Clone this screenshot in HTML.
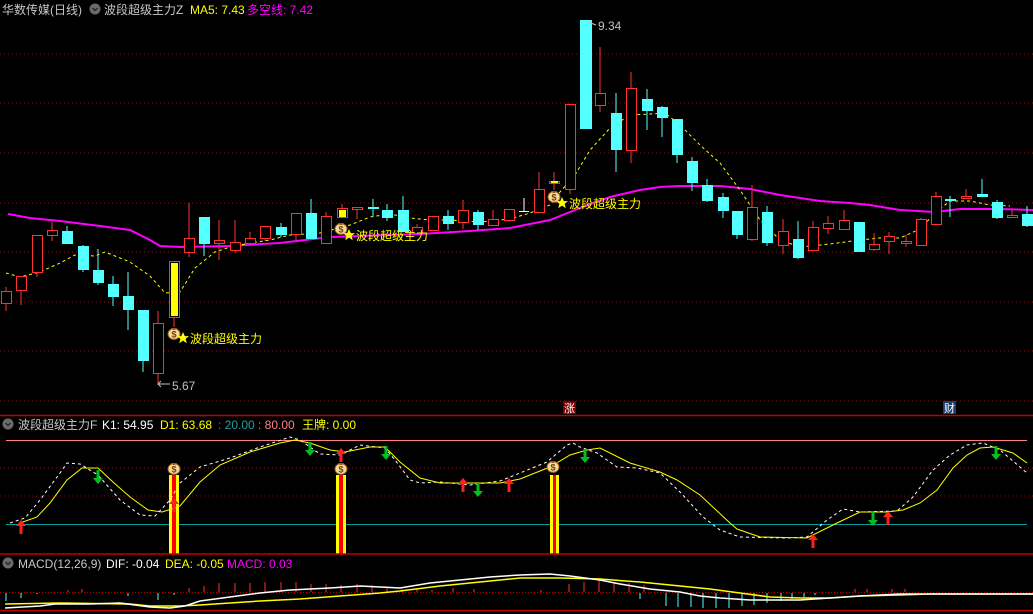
<!DOCTYPE html>
<html><head><meta charset="utf-8"><style>
html,body{margin:0;padding:0;background:#000;width:1033px;height:614px;overflow:hidden}
svg{display:block}
text{font-family:"Liberation Sans","Noto Sans CJK SC",sans-serif;font-size:12px}
.r line,.r rect{stroke:#ff3232;fill:#000;shape-rendering:crispEdges}
.c line,.c rect{stroke:#54ffff;fill:#54ffff;shape-rendering:crispEdges}
</style></head><body>
<svg width="1033" height="614" viewBox="0 0 1033 614" xmlns="http://www.w3.org/2000/svg">
<defs>
<g id="bag"><ellipse cx="0" cy="1" rx="6" ry="5.5" fill="#f3dc96" stroke="#9a5a1a" stroke-width="1"/><path d="M-3,-5 L3,-5 L1,-3 L-1,-3Z" fill="#9a5a1a"/><text x="0" y="4.5" text-anchor="middle" style="font-size:9px;font-weight:bold" fill="#7a3a10">$</text></g>
<path id="star" d="M0,-6 L1.8,-1.9 6,-1.9 2.6,0.9 3.8,5.2 0,2.6 -3.8,5.2 -2.6,0.9 -6,-1.9 -1.8,-1.9Z" fill="#ffff00"/>
<g id="up"><path d="M0,-7 L5,-1 L1.5,-1 L1.5,7 L-1.5,7 L-1.5,-1 L-5,-1Z" fill="#ff2020"/></g>
<g id="dn"><path d="M0,7 L5,1 L1.5,1 L1.5,-7 L-1.5,-7 L-1.5,1 L-5,1Z" fill="#00c020"/></g>
<g id="hd"><circle cx="0" cy="0" r="5.5" fill="#6a6a6a"/><path d="M-2.5,-1 L0,1.5 L2.5,-1" stroke="#222" stroke-width="1.3" fill="none"/></g>
</defs>

<g stroke="#8a1010" stroke-width="1" stroke-dasharray="1,3">
<line x1="0" y1="54" x2="1033" y2="54"/><line x1="0" y1="103" x2="1033" y2="103"/><line x1="0" y1="153" x2="1033" y2="153"/><line x1="0" y1="203" x2="1033" y2="203"/><line x1="0" y1="252" x2="1033" y2="252"/><line x1="0" y1="302" x2="1033" y2="302"/><line x1="0" y1="351" x2="1033" y2="351"/><line x1="0" y1="401" x2="1033" y2="401"/>
</g>
<line x1="0" y1="415.5" x2="1033" y2="415.5" stroke="#c00000" stroke-width="1.5"/>

<polyline fill="none" stroke="#ff00ff" stroke-width="2" points="8,214 30,218 60,221 100,226 130,230 150,240 160,246 180,247 230,246 280,243 330,237 420,234 470,231 510,228 550,220 580,208 610,197 640,190 660,187 680,186 720,186 750,189 780,195 820,201 850,203 870,205 900,210 935,212 960,209 1000,209 1033,210"/>
<polyline fill="none" stroke="#ffff00" stroke-width="1" stroke-dasharray="3,3" points="6,273 20,277 40,272 60,263 75,255 95,256 105,252 130,262 150,276 165,293 180,292 195,268 215,252 230,247 250,243 270,240 290,235 320,233 350,225 370,217 390,214 410,218 430,220 450,220 480,222 510,219 530,213 550,205 560,192 575,175 590,150 610,128 630,115 650,114 665,113 680,125 700,145 720,163 740,190 760,220 780,240 800,247 830,244 860,240 880,238 900,238 920,229 935,213 950,201 970,201 990,205 1010,206"/>

<g stroke-width="1">
<g class="r">
<line x1="6" y1="287" x2="6" y2="311"/><rect x="1.5" y="291.5" width="10" height="12"/>
<line x1="21" y1="276" x2="21" y2="305"/><rect x="16.5" y="276.5" width="10" height="14"/>
<line x1="37" y1="235" x2="37" y2="277"/><rect x="32.5" y="235.5" width="10" height="37"/>
<line x1="52" y1="222" x2="52" y2="241"/><rect x="47.5" y="230.5" width="10" height="5"/>
<line x1="158" y1="311" x2="158" y2="385"/><rect x="153.5" y="323.5" width="10" height="50"/>
<line x1="174" y1="261" x2="174" y2="327"/><rect x="169.5" y="261.5" width="10" height="56"/>
<line x1="189" y1="203" x2="189" y2="257"/><rect x="184.5" y="238.5" width="10" height="14"/>
<line x1="219" y1="220" x2="219" y2="260"/><rect x="214.5" y="240.5" width="10" height="3"/>
<line x1="235" y1="220" x2="235" y2="253"/><rect x="230.5" y="242.5" width="10" height="8"/>
<line x1="250" y1="232" x2="250" y2="243"/><rect x="245.5" y="238.5" width="10" height="5"/>
<line x1="265" y1="226" x2="265" y2="241"/><rect x="260.5" y="226.5" width="10" height="12"/>
<line x1="296" y1="213" x2="296" y2="240"/><rect x="291.5" y="213.5" width="10" height="21"/>
<line x1="326" y1="212" x2="326" y2="244"/><rect x="321.5" y="216.5" width="10" height="27"/>
<line x1="342" y1="204" x2="342" y2="217"/><rect x="337.5" y="208.5" width="10" height="9"/>
<line x1="357" y1="207" x2="357" y2="219"/><rect x="352.5" y="207.5" width="10" height="2"/>
<line x1="417" y1="224" x2="417" y2="233"/><rect x="412.5" y="227.5" width="10" height="6"/>
<line x1="433" y1="216" x2="433" y2="230"/><rect x="428.5" y="216.5" width="10" height="14"/>
<line x1="463" y1="200" x2="463" y2="229"/><rect x="458.5" y="210.5" width="10" height="12"/>
<line x1="493" y1="210" x2="493" y2="225"/><rect x="488.5" y="219.5" width="10" height="6"/>
<line x1="509" y1="209" x2="509" y2="222"/><rect x="504.5" y="209.5" width="10" height="11"/>
<line x1="539" y1="172" x2="539" y2="212"/><rect x="534.5" y="189.5" width="10" height="23"/>
<line x1="554" y1="172" x2="554" y2="190"/><rect x="549.5" y="181.5" width="10" height="2"/>
<line x1="570" y1="104" x2="570" y2="194"/><rect x="565.5" y="104.5" width="10" height="85"/>
<line x1="600" y1="47" x2="600" y2="112"/><rect x="595.5" y="93.5" width="10" height="12"/>
<line x1="631" y1="72" x2="631" y2="163"/><rect x="626.5" y="88.5" width="10" height="62"/>
<line x1="752" y1="185" x2="752" y2="241"/><rect x="747.5" y="207.5" width="10" height="32"/>
<line x1="783" y1="219" x2="783" y2="254"/><rect x="778.5" y="231.5" width="10" height="14"/>
<line x1="813" y1="221" x2="813" y2="250"/><rect x="808.5" y="227.5" width="10" height="23"/>
<line x1="828" y1="216" x2="828" y2="234"/><rect x="823.5" y="223.5" width="10" height="5"/>
<line x1="844" y1="210" x2="844" y2="229"/><rect x="839.5" y="220.5" width="10" height="9"/>
<line x1="874" y1="233" x2="874" y2="251"/><rect x="869.5" y="244.5" width="10" height="5"/>
<line x1="889" y1="232" x2="889" y2="254"/><rect x="884.5" y="236.5" width="10" height="5"/>
<line x1="906" y1="235" x2="906" y2="247"/><rect x="901.5" y="241.5" width="10" height="2"/>
<line x1="921" y1="218" x2="921" y2="245"/><rect x="916.5" y="219.5" width="10" height="26"/>
<line x1="936" y1="192" x2="936" y2="224"/><rect x="931.5" y="196.5" width="10" height="28"/>
<line x1="966" y1="189" x2="966" y2="198"/><rect x="961.5" y="196.5" width="10" height="2"/>
<line x1="1012" y1="210" x2="1012" y2="217"/><rect x="1007.5" y="215.5" width="10" height="2"/>
</g>
<g fill="#ffff00"><rect x="171" y="263" width="7" height="53"/><rect x="339" y="210" width="7" height="7"/><rect x="551" y="181" width="7" height="2"/></g>
<g class="c">
<line x1="67" y1="226" x2="67" y2="244"/><rect x="62.5" y="231.5" width="10" height="12"/>
<line x1="83" y1="245" x2="83" y2="272"/><rect x="78.5" y="246.5" width="10" height="23"/>
<line x1="98" y1="249" x2="98" y2="285"/><rect x="93.5" y="270.5" width="10" height="12"/>
<line x1="113" y1="276" x2="113" y2="306"/><rect x="108.5" y="284.5" width="10" height="12"/>
<line x1="128" y1="272" x2="128" y2="330"/><rect x="123.5" y="296.5" width="10" height="13"/>
<line x1="143" y1="310" x2="143" y2="372"/><rect x="138.5" y="310.5" width="10" height="50"/>
<line x1="204" y1="217" x2="204" y2="256"/><rect x="199.5" y="217.5" width="10" height="26"/>
<line x1="281" y1="223" x2="281" y2="237"/><rect x="276.5" y="227.5" width="10" height="7"/>
<line x1="311" y1="199" x2="311" y2="239"/><rect x="306.5" y="213.5" width="10" height="25"/>
<line x1="373" y1="199" x2="373" y2="217"/><rect x="368.5" y="207.5" width="10" height="1"/>
<line x1="387" y1="204" x2="387" y2="221"/><rect x="382.5" y="210.5" width="10" height="7"/>
<line x1="403" y1="196" x2="403" y2="231"/><rect x="398.5" y="210.5" width="10" height="21"/>
<line x1="448" y1="210" x2="448" y2="230"/><rect x="443.5" y="216.5" width="10" height="7"/>
<line x1="478" y1="210" x2="478" y2="230"/><rect x="473.5" y="212.5" width="10" height="12"/>
<line x1="586" y1="20" x2="586" y2="128"/><rect x="580.5" y="20.5" width="11" height="108"/>
<line x1="616" y1="93" x2="616" y2="172"/><rect x="611.5" y="113.5" width="10" height="36"/>
<line x1="647" y1="89" x2="647" y2="130"/><rect x="642.5" y="99.5" width="10" height="11"/>
<line x1="662" y1="106" x2="662" y2="137"/><rect x="657.5" y="107.5" width="10" height="10"/>
<line x1="677" y1="119" x2="677" y2="163"/><rect x="672.5" y="119.5" width="10" height="35"/>
<line x1="692" y1="157" x2="692" y2="191"/><rect x="687.5" y="161.5" width="10" height="21"/>
<line x1="707" y1="179" x2="707" y2="202"/><rect x="702.5" y="185.5" width="10" height="15"/>
<line x1="723" y1="193" x2="723" y2="218"/><rect x="718.5" y="197.5" width="10" height="13"/>
<line x1="737" y1="211" x2="737" y2="239"/><rect x="732.5" y="211.5" width="10" height="23"/>
<line x1="767" y1="206" x2="767" y2="246"/><rect x="762.5" y="212.5" width="10" height="30"/>
<line x1="798" y1="221" x2="798" y2="259"/><rect x="793.5" y="239.5" width="10" height="18"/>
<line x1="859" y1="222" x2="859" y2="252"/><rect x="854.5" y="222.5" width="10" height="29"/>
<line x1="950" y1="196" x2="950" y2="217"/><rect x="945.5" y="199.5" width="10" height="1"/>
<line x1="982" y1="179" x2="982" y2="197"/><rect x="977.5" y="194.5" width="10" height="2"/>
<line x1="997" y1="200" x2="997" y2="219"/><rect x="992.5" y="202.5" width="10" height="15"/>
<line x1="1027" y1="206" x2="1027" y2="227"/><rect x="1022.5" y="214.5" width="10" height="11"/>
</g>
<g stroke="#ffffff"><line x1="524" y1="198" x2="524" y2="211"/><line x1="519" y1="211.5" x2="529" y2="211.5"/></g>
</g>

<use href="#bag" x="174" y="333"/><use href="#star" x="183" y="338"/>
<text x="190" y="343" fill="#ffff00">波段超级主力</text>
<use href="#bag" x="341" y="228"/><use href="#star" x="349" y="235"/>
<text x="356" y="240" fill="#ffff00">波段超级主力</text>
<use href="#bag" x="554" y="196"/><use href="#star" x="562" y="203"/>
<text x="569" y="208" fill="#ffff00">波段超级主力</text>

<text x="598" y="30" fill="#c0c0c0">9.34</text>
<path d="M588,22 L596,25" stroke="#c0c0c0"/>
<text x="172" y="390" fill="#c0c0c0">5.67</text>
<path d="M158,384 L170,384 M161,381 L158,384 L161,387" stroke="#c0c0c0" fill="none"/>

<rect x="563" y="401" width="13" height="13" fill="#800000"/>
<text x="564" y="412" fill="#fff" style="font-size:11px">涨</text>
<rect x="943" y="401" width="13" height="13" fill="#1a3f6e"/>
<text x="944" y="412" fill="#fff" style="font-size:11px">财</text>

<text x="2" y="14" fill="#c8c8c8">华数传媒(日线)</text>
<use href="#hd" x="95" y="9"/>
<text x="104" y="14" fill="#c8c8c8">波段超级主力Z</text>
<text x="190" y="14" fill="#ffff00">MA5: 7.43</text>
<text x="247" y="14" fill="#ff00ff">多空线: 7.42</text>

<use href="#hd" x="8" y="424"/>
<text x="18" y="429" fill="#c8c8c8">波段超级主力F</text>
<text x="102" y="429" fill="#ffffff">K1: 54.95</text>
<text x="160" y="429" fill="#ffff00">D1: 63.68</text>
<text x="218" y="429" fill="#20a0a0">: 20.00</text>
<text x="258" y="429" fill="#ff8080">: 80.00</text>
<text x="302" y="429" fill="#ffff00">王牌: 0.00</text>
<line x1="6" y1="440.5" x2="1027" y2="440.5" stroke="#ff8080"/>
<g stroke="#8a1010" stroke-dasharray="1,3"><line x1="0" y1="468" x2="1033" y2="468"/><line x1="0" y1="496" x2="1033" y2="496"/></g>
<line x1="6" y1="524.5" x2="1027" y2="524.5" stroke="#00a0a0"/>
<g>
<rect x="169" y="475" width="10" height="79" fill="#ffff00"/><rect x="172" y="475" width="4" height="79" fill="#ff0000"/>
<rect x="336" y="475" width="10" height="79" fill="#ffff00"/><rect x="339" y="475" width="4" height="79" fill="#ff0000"/>
<rect x="550" y="475" width="9" height="79" fill="#ffff00"/><rect x="553" y="475" width="3" height="79" fill="#ff0000"/>
</g>
<polyline fill="none" stroke="#ffffff" stroke-dasharray="3,3" points="10,523 25,518 40,500 60,473 67,463 80,464 98,475 120,500 140,515 155,516 170,500 180,483 200,467 230,458 260,447 290,437 300,440 320,454 340,455 360,445 385,448 395,460 410,480 420,483 440,482 470,485 500,481 520,473 547,462 567,445 573,443 580,447 597,453 617,467 637,468 660,473 680,492 703,517 720,530 740,537 787,538 807,537 827,520 843,509 860,512 897,511 913,497 933,470 950,455 967,445 983,443 1000,450 1027,473"/>
<polyline fill="none" stroke="#ffff00" points="20,523 37,517 50,503 67,480 82,468 98,468 113,482 130,497 148,510 162,512 175,508 180,506 200,482 220,465 250,452 280,443 295,440 310,443 330,450 345,452 370,447 385,447 400,462 420,478 440,483 500,483 520,479 550,467 570,455 587,450 600,448 630,463 660,472 677,480 700,495 730,523 737,529 760,537 807,538 837,523 860,512 887,512 903,510 920,503 937,490 953,468 967,455 980,448 993,447 1013,453 1027,463"/>
<use href="#bag" x="174" y="468"/><use href="#bag" x="341" y="468"/><use href="#bag" x="553" y="466"/>
<use href="#up" x="21" y="527"/><use href="#up" x="174" y="505"/><use href="#up" x="341" y="455"/><use href="#up" x="463" y="485"/><use href="#up" x="509" y="485"/><use href="#up" x="813" y="541"/><use href="#up" x="888" y="518"/>
<use href="#dn" x="98" y="477"/><use href="#dn" x="310" y="449"/><use href="#dn" x="386" y="453"/><use href="#dn" x="478" y="490"/><use href="#dn" x="585" y="456"/><use href="#dn" x="873" y="519"/><use href="#dn" x="996" y="453"/>
<line x1="0" y1="554" x2="1033" y2="554" stroke="#c00000" stroke-width="1.5"/>

<use href="#hd" x="8" y="563"/>
<text x="18" y="568" fill="#c8c8c8">MACD(12,26,9)</text>
<text x="106" y="568" fill="#ffffff">DIF: -0.04</text>
<text x="165" y="568" fill="#ffff00">DEA: -0.05</text>
<text x="227" y="568" fill="#ff00ff">MACD: 0.03</text>
<line x1="0" y1="592.5" x2="1033" y2="592.5" stroke="#c00000" stroke-dasharray="1,2"/>
<g stroke="#ff3030">
<line x1="68" y1="592" x2="68" y2="590"/><line x1="82" y1="592" x2="82" y2="589"/><line x1="189" y1="592" x2="189" y2="588"/><line x1="204" y1="592" x2="204" y2="586"/><line x1="219" y1="592" x2="219" y2="583"/><line x1="235" y1="592" x2="235" y2="583"/><line x1="250" y1="592" x2="250" y2="583"/><line x1="265" y1="592" x2="265" y2="582"/><line x1="281" y1="592" x2="281" y2="582"/><line x1="296" y1="592" x2="296" y2="582"/><line x1="311" y1="592" x2="311" y2="584"/><line x1="326" y1="592" x2="326" y2="584"/><line x1="341" y1="592" x2="341" y2="585"/><line x1="357" y1="592" x2="357" y2="584"/><line x1="372" y1="592" x2="372" y2="585"/><line x1="387" y1="592" x2="387" y2="587"/><line x1="402" y1="592" x2="402" y2="589"/><line x1="417" y1="592" x2="417" y2="589"/><line x1="432" y1="592" x2="432" y2="590"/><line x1="453" y1="592" x2="453" y2="588"/><line x1="474" y1="592" x2="474" y2="589"/><line x1="541" y1="592" x2="541" y2="590"/><line x1="569" y1="592" x2="569" y2="584"/><line x1="584" y1="592" x2="584" y2="582"/><line x1="599" y1="592" x2="599" y2="580"/><line x1="614" y1="592" x2="614" y2="583"/><line x1="629" y1="592" x2="629" y2="583"/><line x1="644" y1="592" x2="644" y2="585"/><line x1="855" y1="592" x2="855" y2="589"/><line x1="867" y1="592" x2="867" y2="589"/><line x1="892" y1="592" x2="892" y2="589"/><line x1="905" y1="592" x2="905" y2="589"/>
</g>
<g stroke="#54ffff">
<line x1="6" y1="593" x2="6" y2="601"/><line x1="21" y1="593" x2="21" y2="598"/><line x1="37" y1="593" x2="37" y2="594"/><line x1="128" y1="593" x2="128" y2="596"/><line x1="158" y1="593" x2="158" y2="600"/><line x1="174" y1="593" x2="174" y2="595"/><line x1="640" y1="593" x2="640" y2="599"/><line x1="666" y1="593" x2="666" y2="606"/><line x1="678" y1="593" x2="678" y2="607"/><line x1="691" y1="593" x2="691" y2="607"/><line x1="703" y1="593" x2="703" y2="608"/><line x1="716" y1="593" x2="716" y2="608"/><line x1="729" y1="593" x2="729" y2="608"/><line x1="742" y1="593" x2="742" y2="606"/><line x1="754" y1="593" x2="754" y2="605"/><line x1="767" y1="593" x2="767" y2="603"/><line x1="781" y1="593" x2="781" y2="601"/><line x1="792" y1="593" x2="792" y2="599"/><line x1="804" y1="593" x2="804" y2="597"/><line x1="815" y1="593" x2="815" y2="595"/>
</g>
<polyline fill="none" stroke="#ffff00" stroke-width="1.5" points="5,604 60,603 130,604 150,606 180,606 200,605 230,603 260,601 300,599 340,596 380,593 400,591 440,586 470,583 500,580 520,578 560,578 600,579 640,582 680,586 710,589 740,593 770,597 800,598 830,598 860,596 900,595 930,594 1033,594"/>
<polyline fill="none" stroke="#ffffff" stroke-width="1.5" points="5,608 40,606 55,604 90,604 120,603 135,605 150,607 170,608 185,606 200,601 230,597 260,593 290,590 330,588 360,586 400,588 430,583 460,580 490,577 520,575 550,574 570,576 600,580 620,584 650,589 680,592 700,596 720,598 750,600 800,600 830,598 860,596 900,594 930,594 1033,594"/>
<line x1="0" y1="610.5" x2="1033" y2="610.5" stroke="#c00000" stroke-width="1.5"/>
</svg>
</body></html>
